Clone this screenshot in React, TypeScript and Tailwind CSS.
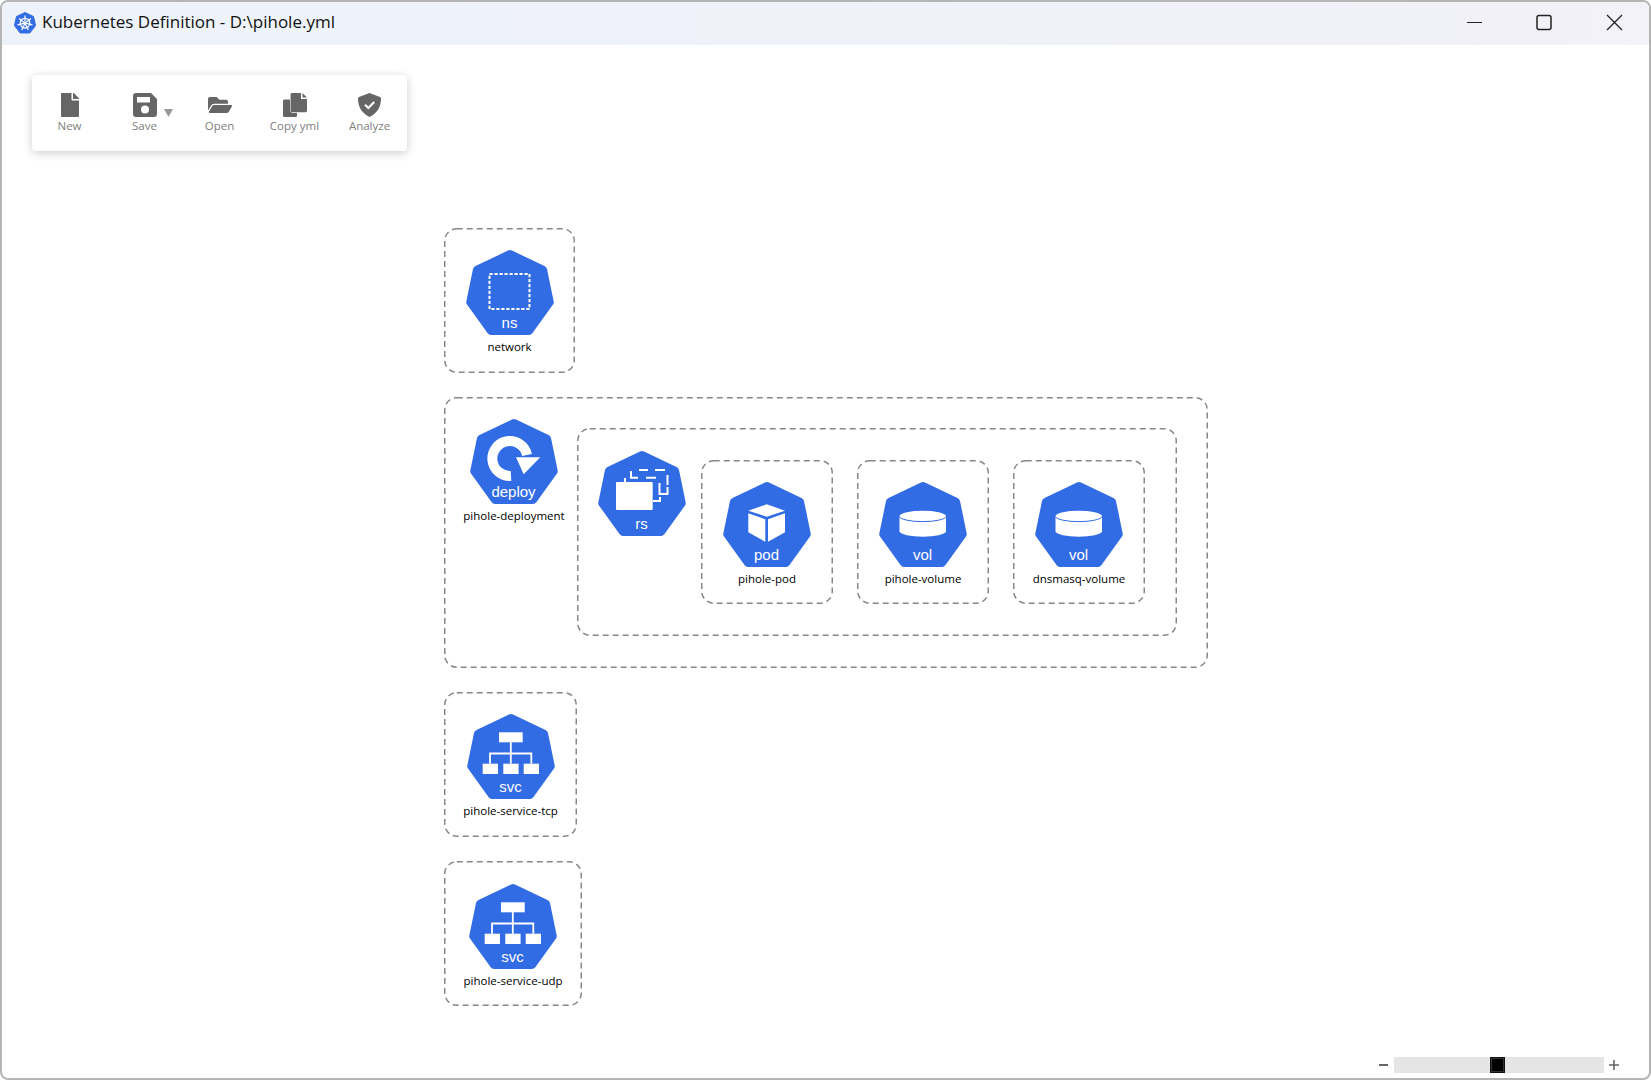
import React from "react";
import { FaFile, FaFolderOpen } from "react-icons/fa";

const HEX = "M44 0 Q45 0 46 0.6 L78.5 16 Q80.5 17 81 19 L87.7 51.5 Q88 53 87 54.5 L66.5 83 Q65 85 63 85 L25 85 Q23 85 21.5 83 L1 54.5 Q0 53 0.3 51.5 L7 19 Q7.5 17 9.5 16 L42 0.6 Q43 0 44 0 Z";

function Glyph({ kind }: { kind: string }) {
  if (kind === "ns")
    return <rect x="23.5" y="24" width="40" height="35" fill="none" stroke="#fff" strokeWidth="2" strokeDasharray="3.2 1.8" />;
  if (kind === "deploy")
    return (
      <g>
        <path d="M41 57 A17.5 17.5 0 1 1 57 36" fill="none" stroke="#fff" strokeWidth="10" />
        <path d="M46 38.3 L70.3 38.3 L53.7 55.3 Z" fill="#fff" />
      </g>
    );
  if (kind === "rs")
    return (
      <g fill="none" stroke="#fff" strokeWidth="2">
        <rect x="18" y="31" width="36.7" height="28" rx="1" fill="#fff" strokeWidth="0" />
        <path d="M27 27 V31 M33 20 V26.7 H40 M48 26.7 H58 M41 19 H50 M57 19 H67 M61.5 32 V44 M69.5 24 V34 M62 43 H69.5 V36 M55 50 H62 V46" />
      </g>
    );
  if (kind === "pod")
    return (
      <g fill="#fff">
        <path d="M43.7 22.3 L62 28.7 L43.7 34.7 L25.3 28.7 Z" />
        <path d="M25.3 31.3 L42.3 37.3 V59.7 L25.3 50.3 Z" />
        <path d="M45 37.3 L62 31.3 V50.3 L45 59.7 Z" />
      </g>
    );
  if (kind === "vol")
    return (
      <g>
        <path d="M20.5 34 A23.3 5.5 0 0 1 67 34 V49.5 A23.3 5.5 0 0 1 20.5 49.5 Z" fill="#fff" />
        <path d="M20.5 34.5 A23.3 5.5 0 0 0 67 34.5" fill="none" stroke="#326ce5" strokeWidth="1" />
      </g>
    );
  return (
    <g fill="#fff">
      <rect x="32" y="18.3" width="23.7" height="10" />
      <rect x="15.7" y="49.7" width="15.3" height="10.3" />
      <rect x="36.3" y="49.7" width="15.3" height="10.3" />
      <rect x="56.7" y="49.7" width="15.3" height="10.3" />
      <path d="M43.8 28 V39.5 M23 49.7 V39.5 H64.3 V49.7 M43.8 39.5 V49.7" fill="none" stroke="#fff" strokeWidth="1.8" />
    </g>
  );
}

function Hex({ kind, text }: { kind: string; text: string }) {
  return (
    <svg width="88" height="85" viewBox="0 0 88 85" className="block shrink-0">
      <path d={HEX} fill="#326ce5" />
      <Glyph kind={kind} />
      <text x="43.5" y="77.5" textAnchor="middle" fill="#fff" fontSize="15" fontFamily="'Liberation Sans', Arial, sans-serif">
        {text}
      </text>
    </svg>
  );
}

function Node({ kind, text, label }: { kind: string; text: string; label: string }) {
  return (
    <div className="flex w-[88px] flex-col items-center">
      <Hex kind={kind} text={text} />
      <div className="mt-[2px] h-[19px] whitespace-nowrap text-[11.5px] leading-[19px] text-black">{label}</div>
    </div>
  );
}

function DashBox({ w, h, className, children }: { w: number; h: number; className: string; children?: React.ReactNode }) {
  return (
    <div className={className}>
      <svg width={w} height={h} className="pointer-events-none absolute left-0 top-0">
        <rect x="0.75" y="0.75" width={w - 1.5} height={h - 1.5} rx="12" fill="none" stroke="#888" strokeWidth="1.5" strokeDasharray="6 4" />
      </svg>
      {children}
    </div>
  );
}

function KubeLogo() {
  const spokes = [0, 51.4, 102.8, 154.2, 205.7, 257.1, 308.5];
  return (
    <svg width="22" height="22" viewBox="0 0 22 22" className="mb-[2px] shrink-0">
      <path d="M11 0.5 L19.5 4.5 L21.6 13.6 L15.8 21 H6.2 L0.4 13.6 L2.5 4.5 Z" fill="#326ce5" stroke="#326ce5" strokeLinejoin="round" />
      <circle cx="11" cy="11.2" r="4.8" fill="none" stroke="#fff" strokeWidth="1.3" />
      {spokes.map((a) => (
        <line key={a} x1="11" y1="11.2" x2="11" y2="3.6" stroke="#fff" strokeWidth="1.2" transform={`rotate(${a} 11 11.2)`} />
      ))}
      <circle cx="11" cy="11.2" r="1.2" fill="#fff" />
    </svg>
  );
}

function SaveIcon() {
  return (
    <svg width="24" height="24" viewBox="0 0 24 24">
      <path
        fillRule="evenodd"
        d="M3 0 H18 L24 6 V21 Q24 24 21 24 H3 Q0 24 0 21 V3 Q0 0 3 0 Z M4 4 V9.5 H17 V4 Z M12 12.5 A4 4 0 1 0 12 20.5 A4 4 0 1 0 12 12.5 Z"
        fill="#666"
      />
    </svg>
  );
}

function CopyIcon() {
  return (
    <svg width="24" height="24" viewBox="0 0 24 24">
      <path d="M1.5 6.5 H9 V24 H1.5 Q0 24 0 22.5 V8 Q0 6.5 1.5 6.5 Z" fill="#666" />
      <path d="M5 20 H14 V22.5 Q14 24 12.5 24 H5 Z" fill="#666" />
      <path d="M9 0 H18 V6 H24 V17.8 Q24 19.2 22.6 19.2 H9 Q7.6 19.2 7.6 17.8 V1.4 Q7.6 0 9 0 Z" fill="#666" stroke="#fff" strokeWidth="1" paintOrder="stroke" />
      <path d="M19.5 0 L24 4.5 H19.5 Z" fill="#666" />
    </svg>
  );
}

function ShieldIcon() {
  return (
    <svg width="23" height="24" viewBox="0 0 23 24">
      <path d="M11.5 0 L22 4 Q23 4.4 23 5.5 C23 14 19 20.5 11.5 24 C4 20.5 0 14 0 5.5 Q0 4.4 1 4 Z" fill="#666" />
      <path d="M7 11.8 L10.3 15 L16.2 9" fill="none" stroke="#fff" strokeWidth="2.2" />
    </svg>
  );
}

function Tool({ label, children }: { label: string; children: React.ReactNode }) {
  return (
    <div className="relative flex w-[75px] flex-col items-center">
      <div className="flex h-[24px] items-center justify-center text-[#666]">{children}</div>
      <div className="whitespace-nowrap text-[11.5px] leading-[18px] text-[#808080]">{label}</div>
    </div>
  );
}

export default function App() {
  return (
    <div
      className="flex h-[1080px] w-[1651px] flex-col overflow-hidden rounded-[8px] border-2 border-[#b5b5b5] bg-white"
      style={{ fontFamily: "'Open Sans', 'Noto Sans', Arial, sans-serif" }}
    >
      <div className="flex h-[43px] shrink-0 items-center bg-gradient-to-r from-[#eef3fb] to-[#f2f2f8] pl-[12px]">
        <KubeLogo />
        <div className="mb-[4px] ml-[6px] whitespace-nowrap text-[17px] text-[#111]">Kubernetes Definition - D:\pihole.yml</div>
        <div className="ml-auto flex h-full items-center">
          <svg width="71" height="43" viewBox="0 0 71 43">
            <line x1="7" x2="22" y1="20.5" y2="20.5" stroke="#222" strokeWidth="1" />
          </svg>
          <svg width="70" height="43" viewBox="0 0 70 43">
            <rect x="6" y="13.5" width="14" height="14" rx="2" fill="none" stroke="#222" strokeWidth="1.5" />
          </svg>
          <svg width="48" height="43" viewBox="0 0 48 43">
            <path d="M6 13 L21 28 M21 13 L6 28" stroke="#222" strokeWidth="1.3" />
          </svg>
        </div>
      </div>

      <div className="relative flex-1">
        {/* toolbar */}
        <div className="absolute left-[30px] top-[30px] flex h-[76px] w-[375px] items-start rounded-[4px] bg-white pt-[18px] shadow-[0_2px_10px_rgba(0,0,0,0.2)]">
          <Tool label="New"><FaFile size={24} /></Tool>
          <Tool label="Save">
            <SaveIcon />
            <svg width="9" height="8" viewBox="0 0 9 8" className="absolute left-[57px] top-[16px]">
              <path d="M0 0 H9 L4.5 8 Z" fill="#999" />
            </svg>
          </Tool>
          <Tool label="Open"><FaFolderOpen size={24} /></Tool>
          <Tool label="Copy yml"><CopyIcon /></Tool>
          <Tool label="Analyze"><ShieldIcon /></Tool>
        </div>

        {/* diagram */}
        <DashBox w={131} h={145} className="absolute left-[442px] top-[183px] flex h-[145px] w-[131px] justify-center pt-[22px]">
          <Node kind="ns" text="ns" label="network" />
        </DashBox>

        <DashBox w={764} h={271} className="absolute left-[442px] top-[352px] flex h-[271px] w-[764px] gap-[19px] pl-[26px] pt-[22px]">
          <Node kind="deploy" text="deploy" label="pihole-deployment" />
          <DashBox w={600} h={208} className="relative mt-[9px] flex h-[208px] w-[600px] items-start pl-[21px] pt-[23px]">
            <Hex kind="rs" text="rs" />
            <div className="ml-[15px] mt-[9px] flex gap-[24px]">
              <DashBox w={132} h={144} className="relative flex h-[144px] w-[132px] justify-center pt-[22px]">
                <Node kind="pod" text="pod" label="pihole-pod" />
              </DashBox>
              <DashBox w={132} h={144} className="relative flex h-[144px] w-[132px] justify-center pt-[22px]">
                <Node kind="vol" text="vol" label="pihole-volume" />
              </DashBox>
              <DashBox w={132} h={144} className="relative flex h-[144px] w-[132px] justify-center pt-[22px]">
                <Node kind="vol" text="vol" label="dnsmasq-volume" />
              </DashBox>
            </div>
          </DashBox>
        </DashBox>

        <DashBox w={133} h={145} className="absolute left-[442px] top-[647px] flex h-[145px] w-[133px] justify-center pt-[22px]">
          <Node kind="svc" text="svc" label="pihole-service-tcp" />
        </DashBox>

        <DashBox w={138} h={145} className="absolute left-[442px] top-[816px] flex h-[145px] w-[138px] justify-center pt-[23px]">
          <Node kind="svc" text="svc" label="pihole-service-udp" />
        </DashBox>

        {/* zoom slider */}
        <div className="absolute bottom-[5px] right-[30px] flex h-[16px] items-center">
          <span className="mr-[5px] h-[2px] w-[9px] bg-[#666]" />
          <div className="ml-[1px] flex h-[16px] w-[210px] justify-start bg-[#e5e5e5] pl-[96px]">
            <div className="h-[16px] w-[15px] border border-[#111] bg-black shadow-[inset_0_0_0_1px_#333]" />
          </div>
          <svg width="10" height="10" viewBox="0 0 10 10" className="ml-[5px]">
            <path d="M5 0 V10 M0 5 H10" stroke="#666" strokeWidth="1.6" />
          </svg>
        </div>
      </div>
    </div>
  );
}
